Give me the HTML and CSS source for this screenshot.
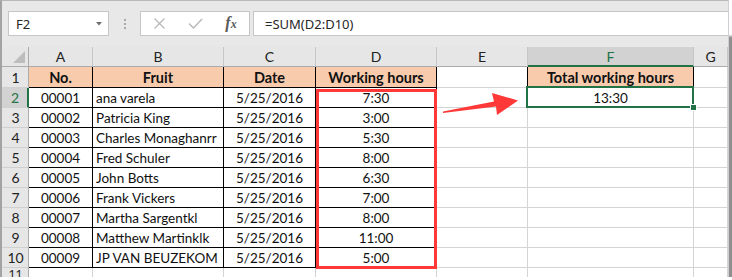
FILE: index.html
```html
<!DOCTYPE html>
<html>
<head>
<meta charset="utf-8">
<link rel="stylesheet" href="styles.css">
</head>
<body>
<div class="window">
  <div class="fbar">
    <div class="namebox"><span>F2</span><svg class="dd" width="6" height="4" viewBox="0 0 6 4"><polygon points="0,0 6,0 3,3.5" fill="#707070"/></svg></div>
    <div class="dots"><i></i><i></i><i></i></div>
    <div class="fbtns">
      <span class="slot"><svg width="11" height="11" viewBox="0 0 11 11"><path d="M0.5 0.5 L10.5 10.5 M10.5 0.5 L0.5 10.5" stroke="#b8b8b8" stroke-width="1.3" fill="none"/></svg></span>
      <span class="slot"><svg width="15" height="11" viewBox="0 0 15 11"><path d="M1 5.5 L5.5 10 L14 1" stroke="#bcbcbc" stroke-width="1.6" fill="none"/></svg></span>
      <span class="slot fx">f<span class="sx">x</span></span>
    </div>
    <div class="finput">=SUM(D2:D10)</div>
  </div>
  <div class="sheet">
    <div class="ch corner"><svg width="12" height="12" viewBox="0 0 12 12"><polygon points="0,12 12,12 12,0" fill="#bdbdbd"/></svg></div>
    <div class="ch">A</div><div class="ch">B</div><div class="ch">C</div><div class="ch">D</div><div class="ch">E</div><div class="ch sel">F</div><div class="ch">G</div>

    <div class="rh">1</div>
    <div class="c bk pk b ctr">No.</div><div class="c bk pk b ctr">Fruit</div><div class="c bk pk b ctr">Date</div><div class="c bk pk b ctr">Working hours</div><div class="c bkr"></div><div class="c bk pk b ctr">Total working hours</div><div class="c"></div>

    <div class="rh rsel">2</div>
    <div class="c bk ctr">00001</div><div class="c bk lft">ana varela</div><div class="c bk ctr">5/25/2016</div><div class="c bk ctr">7:30</div><div class="c"></div><div class="c ctr f2">13:30<span class="selbox"><i class="handle"></i></span></div><div class="c"></div>

    <div class="rh">3</div>
    <div class="c bk ctr">00002</div><div class="c bk lft">Patricia King</div><div class="c bk ctr">5/25/2016</div><div class="c bk ctr">3:00</div><div class="c"></div><div class="c"></div><div class="c"></div>

    <div class="rh">4</div>
    <div class="c bk ctr">00003</div><div class="c bk lft">Charles Monaghanrr</div><div class="c bk ctr">5/25/2016</div><div class="c bk ctr">5:30</div><div class="c"></div><div class="c"></div><div class="c"></div>

    <div class="rh">5</div>
    <div class="c bk ctr">00004</div><div class="c bk lft">Fred Schuler</div><div class="c bk ctr">5/25/2016</div><div class="c bk ctr">8:00</div><div class="c"></div><div class="c"></div><div class="c"></div>

    <div class="rh">6</div>
    <div class="c bk ctr">00005</div><div class="c bk lft">John Botts</div><div class="c bk ctr">5/25/2016</div><div class="c bk ctr">6:30</div><div class="c"></div><div class="c"></div><div class="c"></div>

    <div class="rh">7</div>
    <div class="c bk ctr">00006</div><div class="c bk lft">Frank Vickers</div><div class="c bk ctr">5/25/2016</div><div class="c bk ctr">7:00</div><div class="c"></div><div class="c"></div><div class="c"></div>

    <div class="rh">8</div>
    <div class="c bk ctr">00007</div><div class="c bk lft">Martha Sargentkl</div><div class="c bk ctr">5/25/2016</div><div class="c bk ctr">8:00</div><div class="c"></div><div class="c"></div><div class="c"></div>

    <div class="rh">9</div>
    <div class="c bk ctr">00008</div><div class="c bk lft">Matthew Martinklk</div><div class="c bk ctr">5/25/2016</div><div class="c bk ctr">11:00</div><div class="c"></div><div class="c"></div><div class="c"></div>

    <div class="rh">10</div>
    <div class="c bk ctr">00009</div><div class="c bk lft">JP VAN BEUZEKOM</div><div class="c bk ctr">5/25/2016</div><div class="c bk ctr">5:00</div><div class="c"></div><div class="c"></div><div class="c"></div>

    <div class="rh r11">11</div>
    <div class="c"></div><div class="c"></div><div class="c"></div><div class="c"></div><div class="c"></div><div class="c"></div><div class="c"></div>

    <div class="redbox"></div>
    <svg class="arrow" width="726" height="230" viewBox="0 0 726 230"><polygon points="441,64.4 492,54.5 490,46 516,53.5 495,68 494,59.5 441,66" fill="#ff3838"/></svg>
  </div>
</div>
</body>
</html>
```
FILE: styles.css
```css
* { box-sizing: border-box; }
body { margin: 0; background: #ffffff; }

.window {
  width: 729px;
  height: 277px;
  border-top: 1px solid #b9b9b9;
  border-left: 2px solid #a3a3a3;
  border-right: 1px solid #cfcfcf;
  background: #e8e8e8;
  box-shadow: 36px 36px 2px #8f8f8f;
  overflow: hidden;
  display: flex;
  flex-direction: column;
}

.fbar {
  flex: none;
  height: 46px;
  display: flex;
  align-items: flex-start;
  padding: 10px 0 0 6px;
  font-family: "Noto Sans", "Open Sans", sans-serif;
  font-size: 13px;
  color: #262626;
}

.namebox {
  width: 101px;
  height: 25px;
  background: #fff;
  border: 1px solid #c6c6c6;
  display: flex;
  align-items: center;
  justify-content: space-between;
  padding: 0 6px 0 7px;
}
.namebox .dd { margin-top: 1px; }

.dots {
  width: 31px;
  height: 25px;
  display: flex;
  flex-direction: column;
  align-items: center;
  justify-content: center;
  gap: 2px;
}
.dots i { display: block; width: 2px; height: 2px; background: #a8a8a8; }

.fbtns {
  width: 110px;
  height: 25px;
  background: #fff;
  border: 1px solid #c6c6c6;
  display: flex;
}
.slot {
  width: 36px;
  display: flex;
  align-items: center;
  justify-content: center;
}
.fx {
  font-family: "Liberation Serif", serif;
  font-style: italic;
  font-weight: bold;
  font-size: 16px;
  color: #5a5a5a;
  align-items: baseline;
  padding-top: 2px;
}
.fx .sx { font-size: 12px; }

.finput {
  flex: 1;
  margin-left: 3px;
  height: 25px;
  background: #fff;
  border: 1px solid #c6c6c6;
  border-right: none;
  padding-left: 11px;
  display: flex;
  align-items: center;
}

.sheet {
  flex: 1;
  position: relative;
  display: grid;
  grid-template-columns: 27px 64px 131px 92px 121px 91px 166px 1fr;
  grid-template-rows: 20px 21px repeat(9, 20px) 1fr;
  background: #fff;
  font-family: "Lato", "Liberation Sans", sans-serif;
  font-size: 13.5px;
  color: #111;
}

.ch {
  background: #e6e6e6;
  border-right: 1px solid #c6c6c6;
  border-bottom: 1px solid #ababab;
  display: flex;
  align-items: center;
  justify-content: center;
  color: #222;
  font-size: 14px;
}
.ch.corner {
  justify-content: flex-end;
  align-items: flex-end;
  padding: 0 3px 3px 0;
  border-right-color: #ababab;
}
.ch.sel {
  background: #d2d2d2;
  color: #217346;
  border-bottom: 2px solid #217346;
}

.rh {
  background: #e6e6e6;
  border-right: 1px solid #ababab;
  border-bottom: 1px solid #d0d0d0;
  display: flex;
  align-items: center;
  justify-content: center;
  color: #222;
  font-size: 14px;
  padding-left: 1px;
}
.rh.rsel {
  background: #d2d2d2;
  color: #217346;
  border-right: 2px solid #217346;
}
.rh.r11 {
  align-items: flex-start;
  font-size: 12px;
  line-height: 12px;
  padding-top: 0;
}

.c {
  border-right: 1px solid #d4d4d4;
  border-bottom: 1px solid #d4d4d4;
  display: flex;
  align-items: center;
  white-space: nowrap;
  overflow: visible;
}
.c.bk { border-right-color: #000; border-bottom-color: #000; }
.c.bkr { border-right-color: #000; }
.c.pk { background: #f8cbad; }
.c.b { font-weight: bold; font-size: 14.5px; }
.c.ctr { justify-content: center; }
.c.lft { padding-left: 3px; }

.f2 { position: relative; }
.selbox {
  position: absolute;
  left: -2px;
  top: -2px;
  right: -1px;
  bottom: -1px;
  border: 2px solid #217346;
}
.handle {
  position: absolute;
  right: -5px;
  bottom: -5px;
  width: 7px;
  height: 7px;
  background: #217346;
  border: 1px solid #fff;
}

.redbox {
  position: absolute;
  left: 314px;
  top: 42px;
  width: 121px;
  height: 180px;
  border: 3px solid #ff3838;
}

.arrow {
  position: absolute;
  left: 0;
  top: 0;
}
```
